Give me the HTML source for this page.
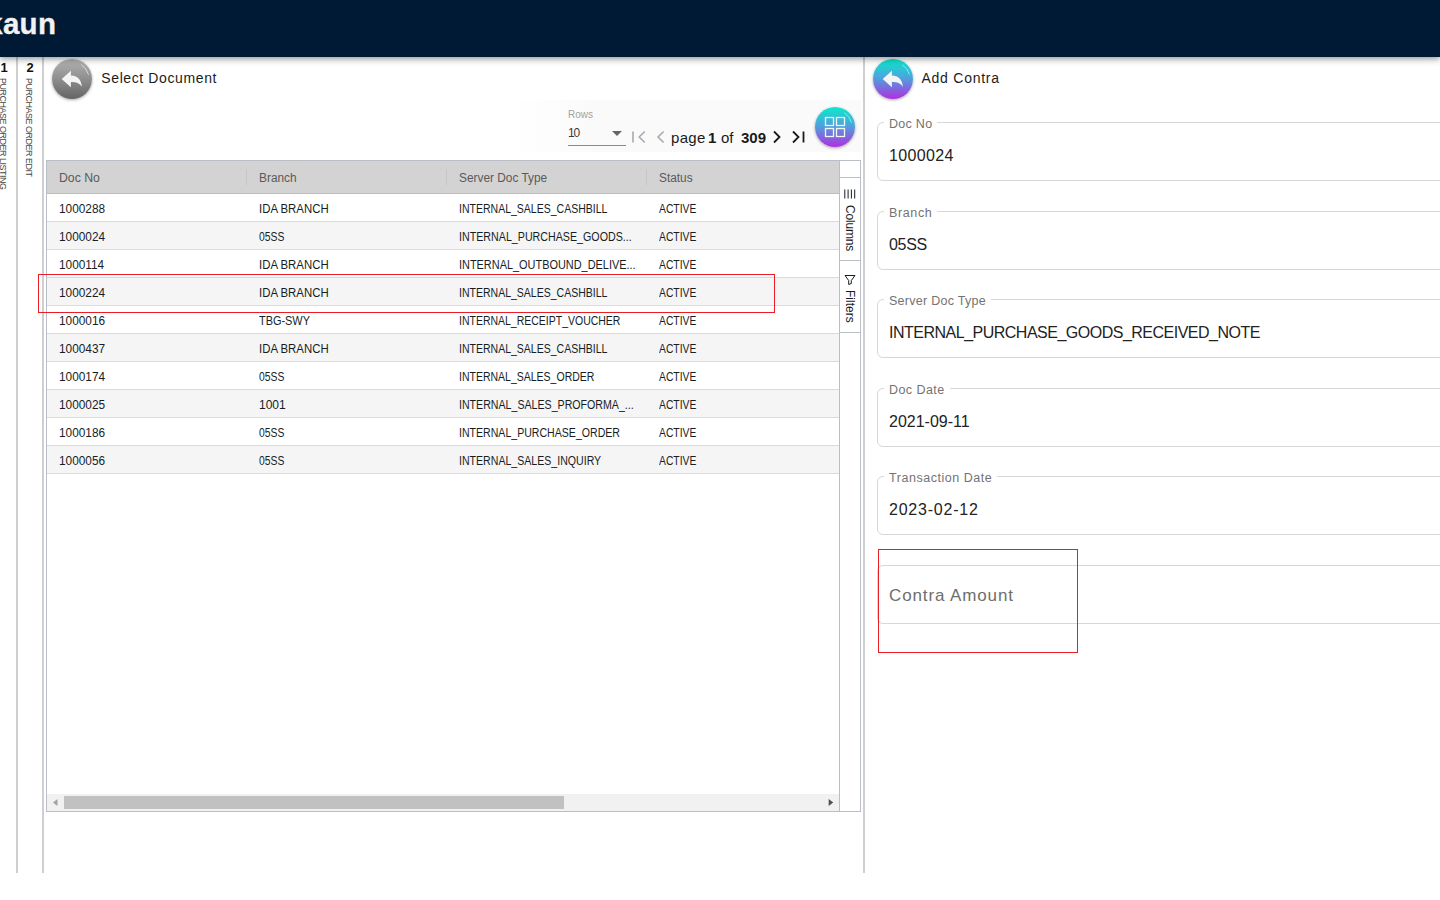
<!DOCTYPE html>
<html lang="en">
<head>
<meta charset="utf-8">
<title>Add Contra</title>
<style>
*{box-sizing:border-box;margin:0;padding:0}
html,body{width:1440px;height:900px;overflow:hidden;background:#fff;font-family:"Liberation Sans",sans-serif;color:#222}
.abs{position:absolute}
#topbar{position:absolute;left:0;top:0;width:1440px;height:57px;background:#001a35;box-shadow:0 2px 4px -1px rgba(0,0,0,.2),0 4px 5px 0 rgba(0,0,0,.14),0 1px 10px 0 rgba(0,0,0,.12);z-index:5}
#logo{position:absolute;left:-13.800px;top:8px;font-size:29.500px;-webkit-text-stroke:.3px #f2f2f2;font-weight:bold;color:#f2f2f2;letter-spacing:.3px;line-height:32px}
.vline{position:absolute;top:56px;width:2px;height:817px;background:#cfcfcf}
.vtab{position:absolute;top:58px;text-align:center}
.vtab b{display:block;font-size:13px;line-height:18px;color:#111;position:relative;left:1px;top:.5px}
.vtab span{display:block;writing-mode:vertical-rl;font-size:9px;color:#444;letter-spacing:-.5px;margin:1.500px auto 0;line-height:10px;white-space:nowrap}
.circ{position:absolute;width:40px;height:40px;border-radius:50%;box-shadow:0 1px 3px rgba(0,0,0,.35)}
.grey{background:linear-gradient(180deg,#b4b4b4 0%,#8e8e8e 50%,#646464 100%)}
.grad{background:linear-gradient(180deg,#0ce9cd 0%,#4aa6dc 45%,#b02fe0 100%)}
.title{position:absolute;font-size:14px;color:#1c1c1c;line-height:20px;white-space:nowrap;letter-spacing:.3px}
/* pagination */
#pager{position:absolute;left:536px;top:100px;width:325px;height:52px}
#pagerbg{position:absolute;left:508px;top:100px;width:353px;height:52px;background:linear-gradient(90deg,#fff 0,#fafafa 90px)}
#pager .lbl{position:absolute;left:32px;top:8.700px;font-size:10px;color:#a2a2a2;line-height:12px}
#pager .val{position:absolute;left:32px;top:25px;font-size:13px;color:#3a3a3a;line-height:16px;letter-spacing:-1.200px;transform:scaleX(.92);transform-origin:0 50%}
#pager .ul{position:absolute;left:32px;top:45px;width:58px;height:1px;background:#8a8a8a}
#pager .caret{position:absolute;left:76px;top:31px;width:0;height:0;border-left:5px solid transparent;border-right:5px solid transparent;border-top:5px solid #666}
#pager .ptxt{position:absolute;top:27.700px;font-size:15px;color:#1a1a1a;line-height:20px;white-space:nowrap}
/* grid */
#grid{position:absolute;left:46px;top:160px;width:815px;height:652px;border:1px solid #babfc7;background:#fff}
#ghead{position:absolute;left:0;top:0;width:792px;height:33px;background:#d3d3d3;border-bottom:1px solid #babfc7}
#ghead div{position:absolute;top:0;height:32px;line-height:35px;font-size:12.5px;color:#5a5a5a;margin-left:12px;transform-origin:0 50%;transform:scaleX(.95);white-space:nowrap}
#ghead i{position:absolute;top:8px;width:1px;height:16px;background:#c4c6ca}
.row{position:absolute;left:0;width:792px;height:28px;border-bottom:1px solid #d9dcde;background:#fff}
.row.odd{background:#f5f5f5}
.row span{position:absolute;top:0;line-height:30px;font-size:12px;color:#181d1f;white-space:nowrap;transform-origin:0 50%;transform:scaleX(.885)}
.c1{left:12px}.c2{left:212px}.c3{left:412px}.c4{left:612px}
#side{position:absolute;left:792px;top:0;width:21px;height:650px;border-left:1px solid #babfc7;background:#fff}
#side .btn{position:absolute;left:0;width:20px;border-top:1px solid #babfc7}
#side .vt{position:absolute;left:2px;writing-mode:vertical-rl;font-size:12px;line-height:16px;color:#181d1f;white-space:nowrap}
#hscroll{position:absolute;left:0;top:633px;width:792px;height:17px;background:#f1f1f1}
#hscroll .thumb{position:absolute;left:17px;top:2px;width:500px;height:13px;background:#c1c1c1}
/* form */
.field{position:absolute;left:877px;width:600px;height:59px;border:1px solid #d8d8d8;border-radius:6px}
.field .lab{position:absolute;left:6px;top:-7px;padding:0 5px;background:#fff;font-size:12.5px;line-height:16px;color:#737373;white-space:nowrap}
.field .v{position:absolute;left:11px;top:22px;font-size:16px;line-height:22px;color:#222;white-space:nowrap}
.red{position:absolute;border:1px solid #ec1c24;z-index:9}
</style>
</head>
<body>
<div id="topbar"><div id="logo">kaun</div></div>

<div class="vline" style="left:16px"></div>
<div class="vline" style="left:42px"></div>
<div class="vline" style="left:863px;width:2px"></div>

<div class="vtab" style="left:-3px;width:12px"><b>1</b><span>PURCHASE ORDER LISTING</span></div>
<div class="vtab" style="left:22px;width:14px"><b>2</b><span>PURCHASE ORDER EDIT</span></div>

<!-- left panel -->
<div class="circ grey" style="left:52px;top:59px">
<svg width="40" height="40" viewBox="0 0 40 40"><path d="M9.700 19.900L18.900 11.800V16.600C25.500 16.800 29.300 20.500 29.900 27.900C27.500 24.300 24.500 23.100 18.900 23.100V28.200Z" fill="#f4f4f4"/><path d="M29.200 5.700A17 17 0 0 1 36.500 15.600" stroke="#e8e8e8" stroke-width="0.8" fill="none"/></svg>
</div>
<div class="title" style="left:101.300px;top:68px;letter-spacing:.61px">Select Document</div>

<div id="pagerbg"></div>
<div id="pager">
  <div class="lbl">Rows</div>
  <div class="val">10</div>
  <div class="caret"></div>
  <div class="ul"></div>
  <svg class="abs" style="left:94px;top:28px" width="180" height="20" viewBox="0 0 180 20">
    <g fill="none" stroke="#a6abb2" stroke-width="1.6"><path d="M3 3.500V14.500"/><path d="M14.700 3.500L9.200 9L14.700 14.500"/><path d="M33.600 3.500L28.100 9L33.600 14.500"/></g>
    <g fill="none" stroke="#1a1a1a" stroke-width="1.8"><path d="M144 3.5L149.5 9L144 14.5"/><path d="M163 3.5L168.5 9L163 14.5"/><path d="M173.5 3.5V14.5"/></g>
  </svg>
  <div class="ptxt" style="left:135px;letter-spacing:.3px">page</div>
  <div class="ptxt" style="left:172px;font-weight:bold">1</div>
  <div class="ptxt" style="left:185px">of</div>
  <div class="ptxt" style="left:205px;font-weight:bold">309</div>
</div>
<div class="circ grad" style="left:815px;top:107px">
<svg width="40" height="40" viewBox="0 0 40 40"><g fill="none" stroke="#f4f4f4" stroke-width="1.3"><rect x="10.5" y="10.5" width="8" height="8"/><rect x="21.5" y="10.5" width="8" height="8"/><rect x="10.5" y="21.5" width="8" height="8"/><rect x="21.5" y="21.5" width="8" height="8"/></g><path d="M29.200 5.700A17 17 0 0 1 36.500 15.600" stroke="#6ff6ee" stroke-width="1" fill="none"/></svg>
</div>

<div id="grid">
  <div id="ghead">
    <div style="left:0;transform:scaleX(.98)">Doc No</div><div style="left:200px">Branch</div><div style="left:400px">Server Doc Type</div><div style="left:600px">Status</div>
    <i style="left:199px"></i><i style="left:399px"></i><i style="left:599px"></i>
  </div>
  <div class="row" style="top:33px"><span class="c1" style="transform:scaleX(0.986)">1000288</span><span class="c2" style="transform:scaleX(0.949)">IDA BRANCH</span><span class="c3" style="transform:scaleX(0.876)">INTERNAL_SALES_CASHBILL</span><span class="c4" style="transform:scaleX(0.86)">ACTIVE</span></div>
  <div class="row odd" style="top:61px"><span class="c1" style="transform:scaleX(0.986)">1000024</span><span class="c2" style="transform:scaleX(0.863)">05SS</span><span class="c3" style="transform:scaleX(0.89)">INTERNAL_PURCHASE_GOODS...</span><span class="c4" style="transform:scaleX(0.86)">ACTIVE</span></div>
  <div class="row" style="top:89px"><span class="c1" style="transform:scaleX(0.986)">1000114</span><span class="c2" style="transform:scaleX(0.949)">IDA BRANCH</span><span class="c3" style="transform:scaleX(0.91)">INTERNAL_OUTBOUND_DELIVE...</span><span class="c4" style="transform:scaleX(0.86)">ACTIVE</span></div>
  <div class="row odd" style="top:117px"><span class="c1" style="transform:scaleX(0.986)">1000224</span><span class="c2" style="transform:scaleX(0.949)">IDA BRANCH</span><span class="c3" style="transform:scaleX(0.876)">INTERNAL_SALES_CASHBILL</span><span class="c4" style="transform:scaleX(0.86)">ACTIVE</span></div>
  <div class="row" style="top:145px"><span class="c1" style="transform:scaleX(0.986)">1000016</span><span class="c2" style="transform:scaleX(0.91)">TBG-SWY</span><span class="c3" style="transform:scaleX(0.874)">INTERNAL_RECEIPT_VOUCHER</span><span class="c4" style="transform:scaleX(0.86)">ACTIVE</span></div>
  <div class="row odd" style="top:173px"><span class="c1" style="transform:scaleX(0.986)">1000437</span><span class="c2" style="transform:scaleX(0.949)">IDA BRANCH</span><span class="c3" style="transform:scaleX(0.876)">INTERNAL_SALES_CASHBILL</span><span class="c4" style="transform:scaleX(0.86)">ACTIVE</span></div>
  <div class="row" style="top:201px"><span class="c1" style="transform:scaleX(0.986)">1000174</span><span class="c2" style="transform:scaleX(0.863)">05SS</span><span class="c3" style="transform:scaleX(0.875)">INTERNAL_SALES_ORDER</span><span class="c4" style="transform:scaleX(0.86)">ACTIVE</span></div>
  <div class="row odd" style="top:229px"><span class="c1" style="transform:scaleX(0.986)">1000025</span><span class="c2" style="transform:scaleX(1.002)">1001</span><span class="c3" style="transform:scaleX(0.885)">INTERNAL_SALES_PROFORMA_...</span><span class="c4" style="transform:scaleX(0.86)">ACTIVE</span></div>
  <div class="row" style="top:257px"><span class="c1" style="transform:scaleX(0.986)">1000186</span><span class="c2" style="transform:scaleX(0.863)">05SS</span><span class="c3" style="transform:scaleX(0.881)">INTERNAL_PURCHASE_ORDER</span><span class="c4" style="transform:scaleX(0.86)">ACTIVE</span></div>
  <div class="row odd" style="top:285px"><span class="c1" style="transform:scaleX(0.986)">1000056</span><span class="c2" style="transform:scaleX(0.863)">05SS</span><span class="c3" style="transform:scaleX(0.882)">INTERNAL_SALES_INQUIRY</span><span class="c4" style="transform:scaleX(0.86)">ACTIVE</span></div>
  <div id="hscroll"><div class="thumb"></div>
    <svg class="abs" style="left:0;top:0" width="792" height="17"><path d="M10.5 5L6 8.5L10.5 12Z" fill="#a3a3a3"/><path d="M781.700 5L786.200 8.500L781.700 12Z" fill="#505050"/></svg>
  </div>
  <div id="side">
    <div class="btn" style="top:16px;height:83px">
      <svg class="abs" style="left:4px;top:11px" width="13" height="11"><path d="M0.800 0.500V9.500M4.100 0.500V9.500M7.400 0.500V9.500M10.700 0.500V9.500" stroke="#181d1f" stroke-width="1" fill="none"/></svg>
      <div class="vt" style="top:27px;letter-spacing:-.2px">Columns</div>
    </div>
    <div class="btn" style="top:99px;height:73px;border-bottom:1px solid #babfc7">
      <svg class="abs" style="left:4px;top:13px" width="13" height="12"><path d="M1 1.500H11L7.300 6.500V9.500L4.700 10.500V6.500Z" stroke="#181d1f" stroke-width="1" fill="none" stroke-linejoin="round"/></svg>
      <div class="vt" style="top:29px;letter-spacing:0">Filters</div>
    </div>
  </div>
</div>

<!-- right panel -->
<div class="circ grad" style="left:873px;top:59px">
<svg width="40" height="40" viewBox="0 0 40 40"><path d="M9.700 19.900L18.900 11.800V16.600C25.500 16.800 29.300 20.500 29.900 27.900C27.500 24.300 24.500 23.100 18.900 23.100V28.200Z" fill="#f4f4f4"/><path d="M29.200 5.700A17 17 0 0 1 36.500 15.600" stroke="#6ff6ee" stroke-width="1" fill="none"/></svg>
</div>
<div class="title" style="left:921.500px;top:68px;letter-spacing:.75px">Add Contra</div>

<div class="field" style="top:122px"><div class="lab" style="letter-spacing:0.28px">Doc No</div><div class="v" style="letter-spacing:.35px">1000024</div></div>
<div class="field" style="top:211px"><div class="lab" style="letter-spacing:0.63px">Branch</div><div class="v" style="letter-spacing:-.3px">05SS</div></div>
<div class="field" style="top:299px"><div class="lab" style="letter-spacing:0.27px">Server Doc Type</div><div class="v" style="letter-spacing:-.5px">INTERNAL_PURCHASE_GOODS_RECEIVED_NOTE</div></div>
<div class="field" style="top:388px"><div class="lab" style="letter-spacing:0.43px">Doc Date</div><div class="v">2021-09-11</div></div>
<div class="field" style="top:476px"><div class="lab" style="letter-spacing:0.54px">Transaction Date</div><div class="v" style="letter-spacing:.78px">2023-02-12</div></div>
<div class="field" style="top:565px;height:59px"><div class="v" style="top:19px;color:#6e6e6e;font-size:17px;letter-spacing:.88px">Contra Amount</div></div>

<div class="red" style="left:38px;top:274px;width:737px;height:39px"></div>
<div class="red" style="left:878px;top:549px;width:200px;height:104px"></div>
</body>
</html>
